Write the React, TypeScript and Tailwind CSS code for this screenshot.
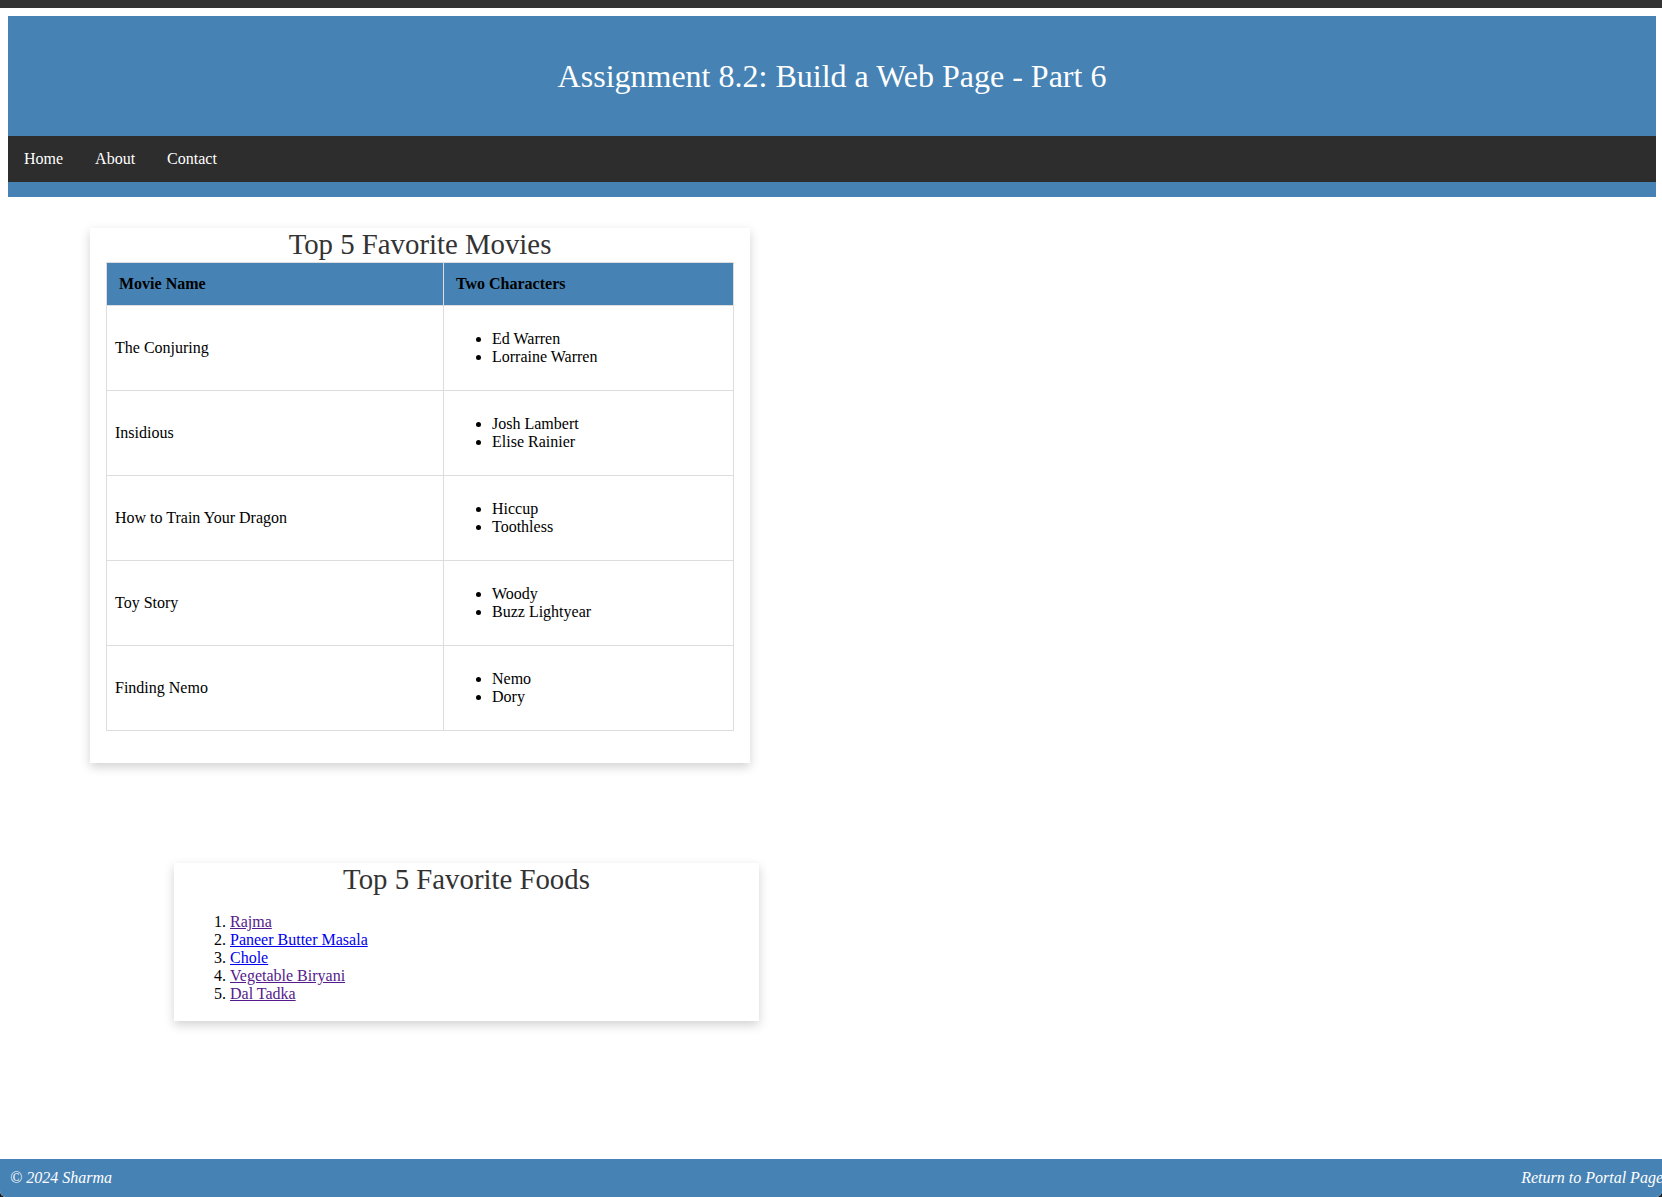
import React from "react";

const movies = [
  { name: "The Conjuring", chars: ["Ed Warren", "Lorraine Warren"] },
  { name: "Insidious", chars: ["Josh Lambert", "Elise Rainier"] },
  { name: "How to Train Your Dragon", chars: ["Hiccup", "Toothless"] },
  { name: "Toy Story", chars: ["Woody", "Buzz Lightyear"] },
  { name: "Finding Nemo", chars: ["Nemo", "Dory"] },
];

const foods: { name: string; visited: boolean }[] = [
  { name: "Rajma", visited: true },
  { name: "Paneer Butter Masala", visited: false },
  { name: "Chole", visited: false },
  { name: "Vegetable Biryani", visited: true },
  { name: "Dal Tadka", visited: true },
];

export default function App() {
  return (
    <div
      className="w-[1662px] h-[1197px] bg-[#1c1c1c] overflow-hidden"
      style={{ fontFamily: '"Liberation Serif", "Times New Roman", serif' }}
    >
      <div className="h-full flex flex-col bg-white rounded-b-[6px] overflow-hidden">
        <div className="h-[8px] bg-[#333333] shrink-0" />
        <div className="pt-[8px] shrink-0">
          <header className="ml-[8px] w-[1648px] bg-[#4682B4]">
            <div className="h-[120px] flex items-center justify-center">
              <h1 className="text-[32px] leading-[37px] text-white font-normal">
                Assignment 8.2: Build a Web Page - Part 6
              </h1>
            </div>
            <nav className="h-[46px] bg-[#2d2d2d] flex items-center">
              {["Home", "About", "Contact"].map((l) => (
                <a key={l} href="#" className="px-4 text-[16px] text-white leading-[18px]">
                  {l}
                </a>
              ))}
            </nav>
            <div className="h-[15px]" />
          </header>
        </div>

        <section className="mt-[31px] ml-[90px] w-[660px] bg-white px-4 pb-[32px] shadow-[0_4px_10px_rgba(0,0,0,0.18)] shrink-0">
          <h2 className="text-[28.8px] leading-[33px] text-[#333333] text-center font-normal mb-[1px]">
            Top 5 Favorite Movies
          </h2>
          <table className="w-full border-collapse border border-[#dddddd] text-[16px] text-black">
            <thead>
              <tr className="bg-[#4682B4]">
                <th className="w-[337px] border border-[#dddddd] px-3 py-3 text-left font-bold leading-[18px]">
                  Movie Name
                </th>
                <th className="border border-[#dddddd] px-3 py-3 text-left font-bold leading-[18px]">
                  Two Characters
                </th>
              </tr>
            </thead>
            <tbody>
              {movies.map((m) => (
                <tr key={m.name}>
                  <td className="border border-[#dddddd] p-2 align-middle leading-[18px]">{m.name}</td>
                  <td className="border border-[#dddddd] p-2 align-middle">
                    <ul className="list-disc pl-10 my-4 leading-[18px]">
                      {m.chars.map((c) => (
                        <li key={c}>{c}</li>
                      ))}
                    </ul>
                  </td>
                </tr>
              ))}
            </tbody>
          </table>
        </section>

        <section className="mt-[100px] ml-[174px] w-[585px] bg-white px-4 pb-[18px] shadow-[0_4px_10px_rgba(0,0,0,0.18)] shrink-0">
          <h2 className="text-[28.8px] leading-[33px] text-[#333333] text-center font-normal">
            Top 5 Favorite Foods
          </h2>
          <ol className="list-decimal pl-10 mt-[17px] text-[16px] leading-[18px] text-black">
            {foods.map((f) => (
              <li key={f.name}>
                <a
                  href="#"
                  className={
                    f.visited
                      ? "underline text-[#551a8b]"
                      : "underline text-[#0000ee]"
                  }
                >
                  {f.name}
                </a>
              </li>
            ))}
          </ol>
        </section>

        <footer className="mt-auto h-[38px] bg-[#4682B4] flex items-center justify-between pl-[10px] text-white italic text-[16px] shrink-0">
          <span>© 2024 Sharma</span>
          <a href="#" className="-mr-[1px] text-white">
            Return to Portal Page
          </a>
        </footer>
      </div>
    </div>
  );
}
